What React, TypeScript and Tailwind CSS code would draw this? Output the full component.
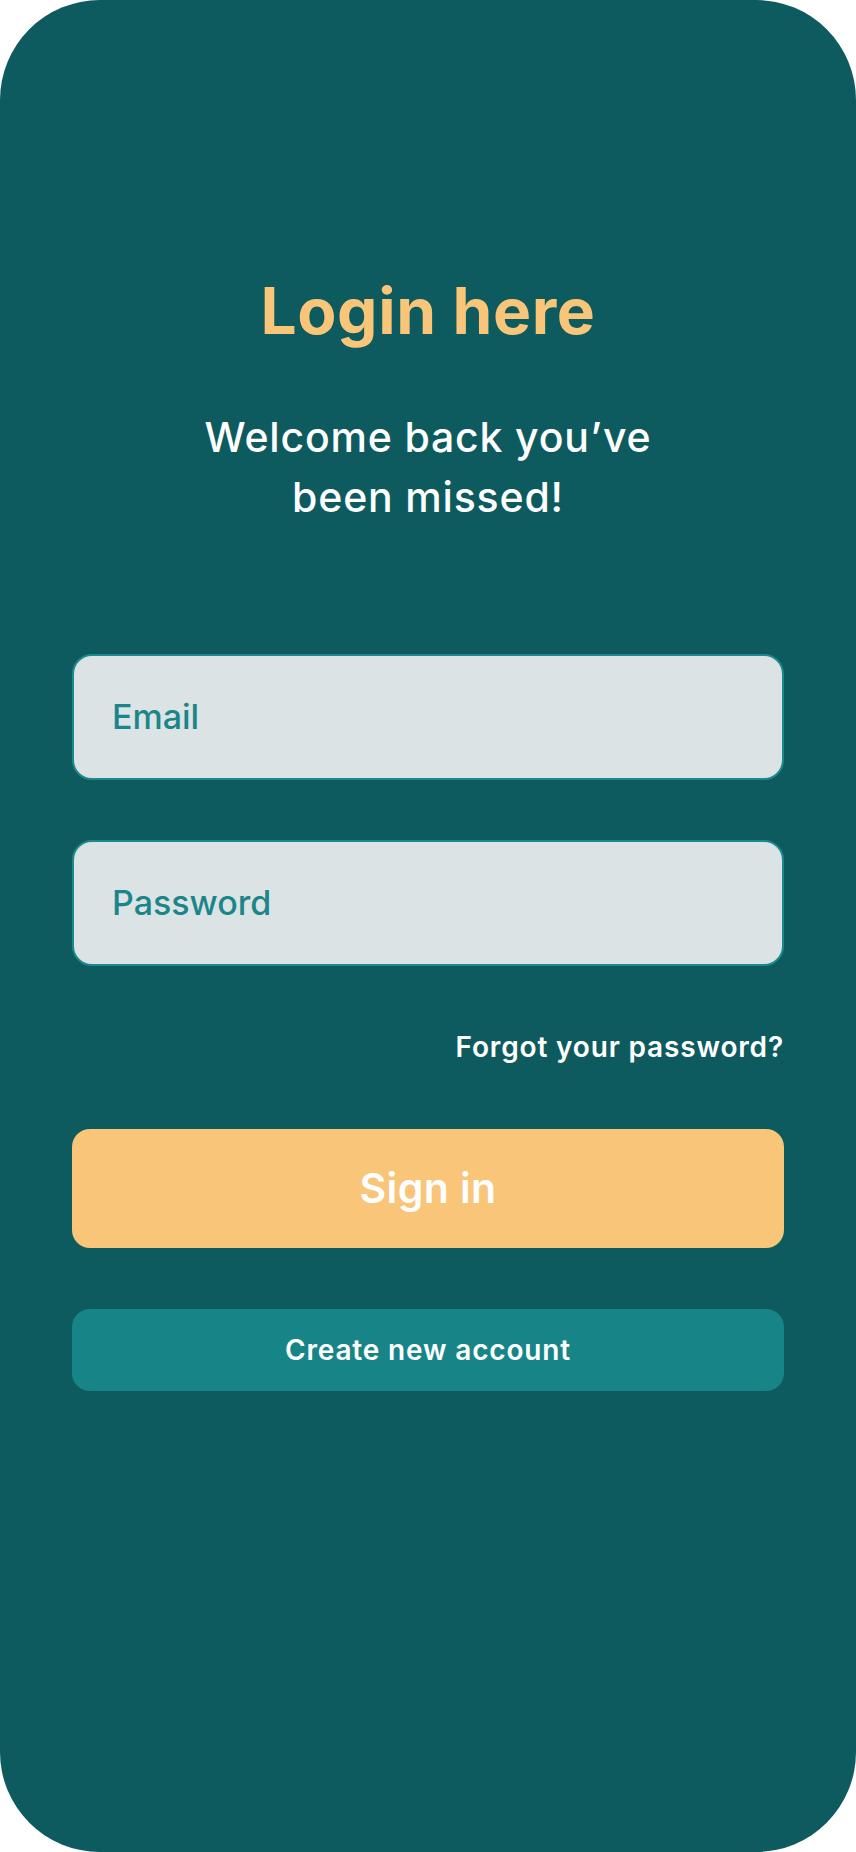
import React from "react";

const font = { fontFamily: "Inter, 'Open Sans', sans-serif" };

function Field({ label }: { label: string }) {
  return (
    <div className="flex h-[126px] w-full items-center rounded-[20px] border-2 border-[#1c8a8c] bg-[#dce3e4] px-[38px]">
      <span className="text-[34px] font-medium leading-none text-[#1b8689]">
        {label}
      </span>
    </div>
  );
}

export default function App() {
  return (
    <div className="bg-white" style={font}>
      <div className="flex h-[1852px] w-full flex-col items-center rounded-[100px] bg-[#0e5b5f] px-[72px] pt-[279px]">
        {/* Heading */}
        <h1 className="text-[64px] font-bold leading-[64px] tracking-[0.01em] text-[#f8c579]">
          Login here
        </h1>
        <p className="mt-[64px] text-center text-[41px] font-medium leading-[60px] tracking-[0.02em] text-white">
          Welcome back you’ve
          <br />
          been missed!
        </p>

        {/* Form */}
        <div className="mt-[127px] flex w-full flex-col gap-[60px]">
          <Field label="Email" />
          <Field label="Password" />
        </div>

        <div className="mt-[65px] w-full text-right text-[28px] font-semibold leading-[32px] tracking-[0.03em] text-white">
          Forgot your password?
        </div>

        <button className="mt-[66px] flex h-[119px] w-full items-center justify-center rounded-[18px] bg-[#f8c579] text-[41px] font-semibold tracking-[0.01em] text-white">
          Sign in
        </button>

        <button className="mt-[61px] flex h-[82px] w-full items-center justify-center rounded-[18px] bg-[#178587] text-[28px] font-semibold tracking-[0.03em] text-white">
          Create new account
        </button>
      </div>
    </div>
  );
}
